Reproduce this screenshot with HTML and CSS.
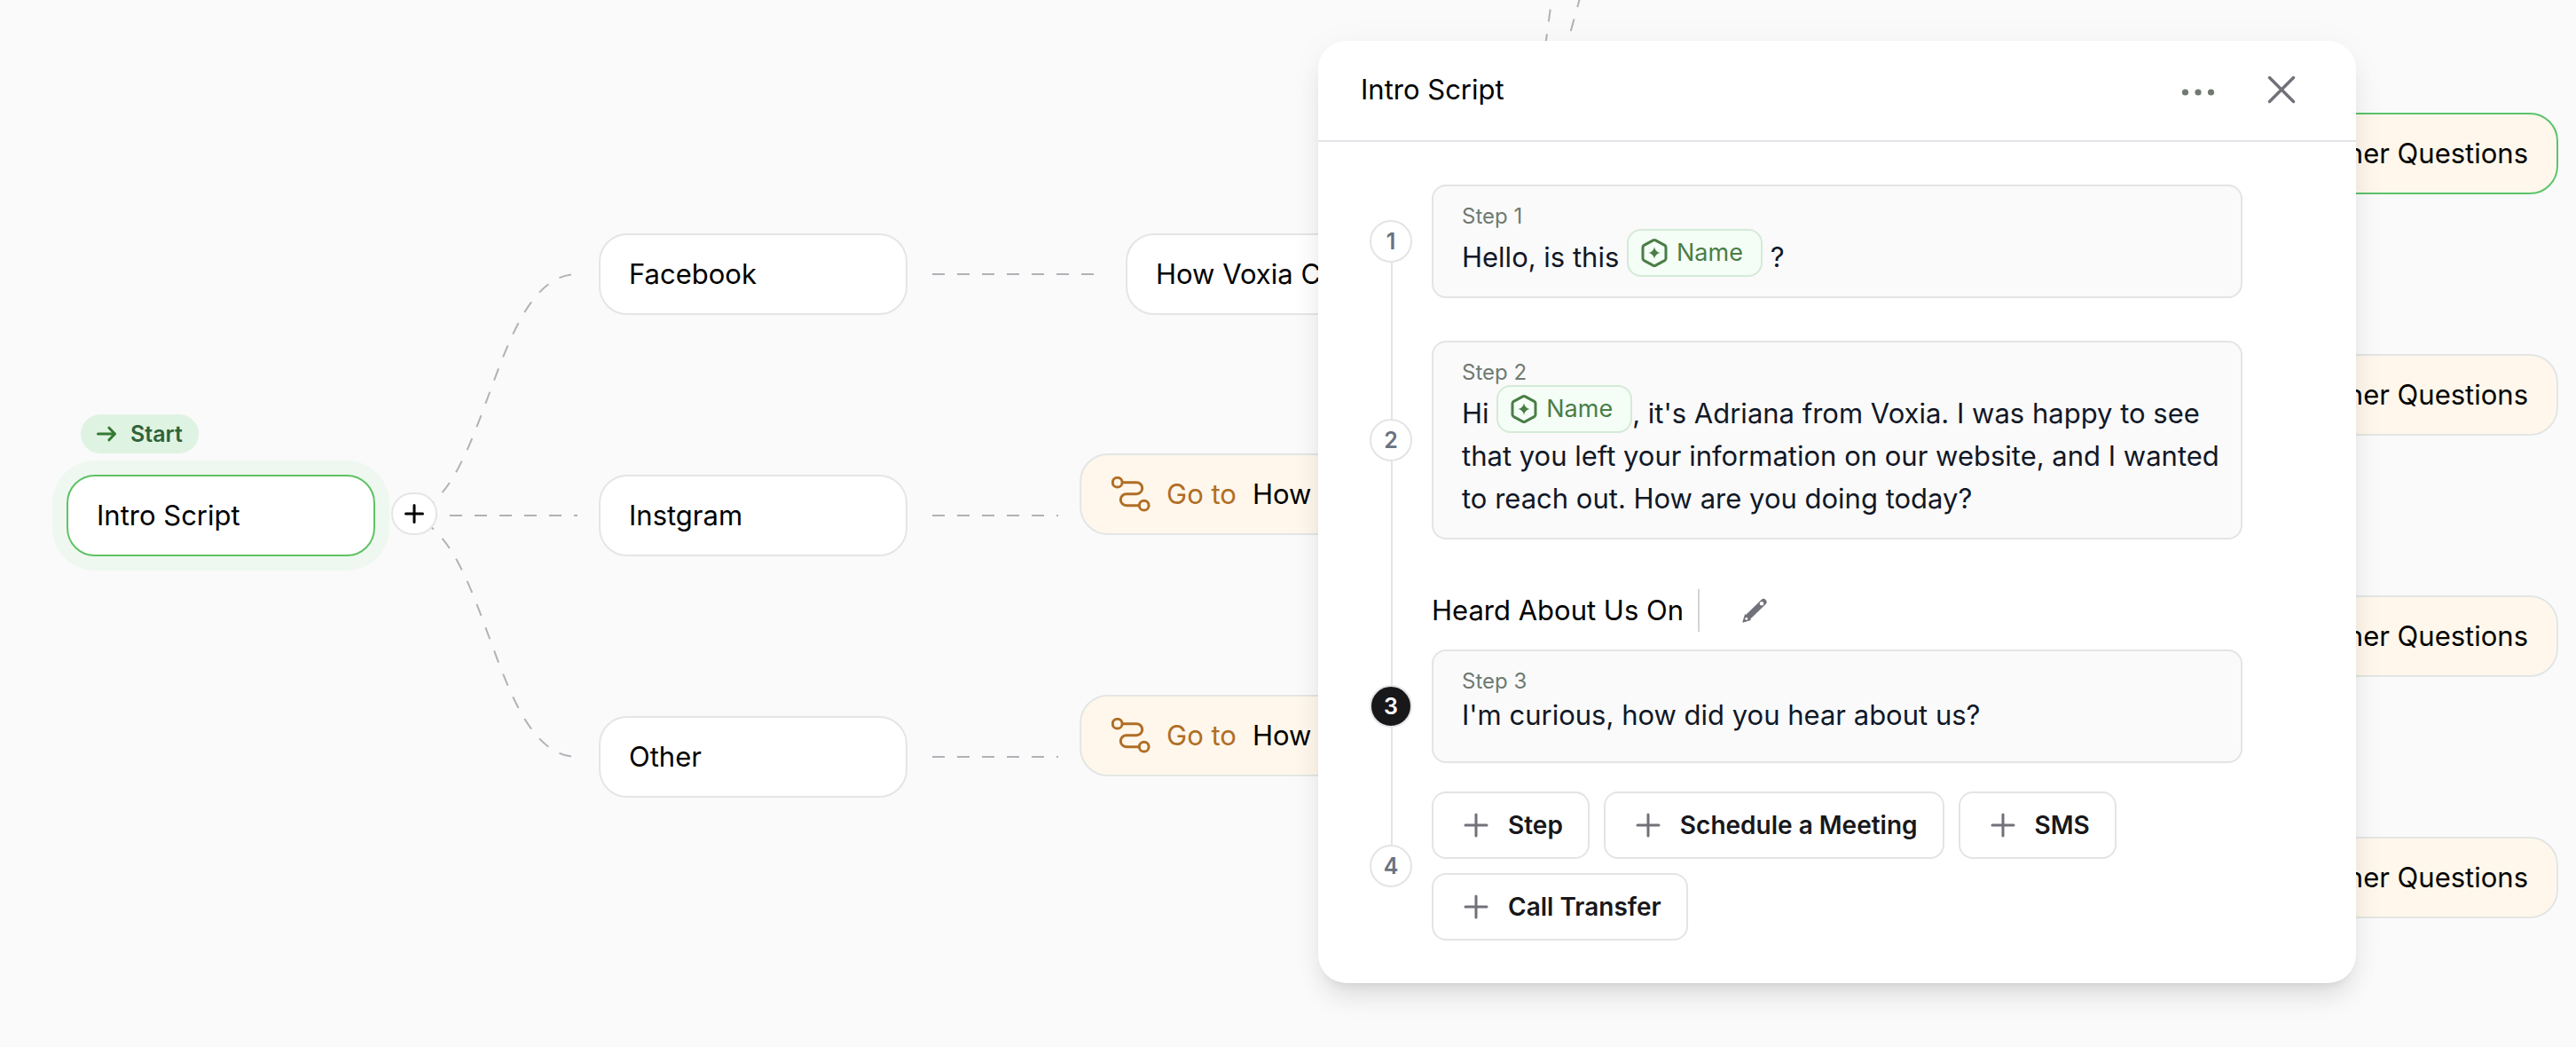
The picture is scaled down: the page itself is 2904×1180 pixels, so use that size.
FILE: index.html
```html
<!DOCTYPE html>
<html lang="en">
<head>
<meta charset="utf-8">
<meta name="viewport" content="width=device-width, initial-scale=1">
<title>Intro Script</title>
<link rel="stylesheet" href="styles.css">
</head>
<body>
<svg class="sprite" aria-hidden="true">
  <symbol id="route" viewBox="0 0 44 40">
    <g fill="none" stroke="currentColor" stroke-width="3">
      <circle cx="6.7" cy="6.7" r="5.4"/>
      <path d="M12 6.7H28.2a6.5 6.5 0 0 1 0 13H16.8a6.5 6.5 0 0 0 0 13H31.4"/>
      <circle cx="36.7" cy="32.7" r="5.4"/>
    </g>
  </symbol>
  <symbol id="variable" viewBox="0 0 30 32">
    <path d="M13.6 1.9 3.4 7.4Q2 8.2 2 9.8V22.2Q2 23.8 3.4 24.6L13.6 30.1Q15 30.8 16.4 30.1L26.6 24.6Q28 23.8 28 22.2V9.8Q28 8.2 26.6 7.4L16.4 1.9Q15 1.2 13.6 1.9Z" fill="none" stroke="currentColor" stroke-width="3"/>
    <path d="M15 9.5Q16.2 14.8 21.5 16 16.2 17.2 15 22.5 13.8 17.2 8.5 16 13.8 14.8 15 9.5Z" fill="currentColor"/>
  </symbol>
  <symbol id="plus" viewBox="0 0 28 28">
    <path d="M14 2V26M2 14H26" fill="none" stroke="currentColor" stroke-width="3" stroke-linecap="round"/>
  </symbol>
</svg>

<main class="canvas">
  <svg class="edges" aria-hidden="true">
    <path d="M451 581C551 581 551 309 651 309"/>
    <path d="M451 581H651"/>
    <path d="M451 581C551 581 551 853 651 853"/>
    <path d="M1051 309H1233"/>
    <path d="M1051 581H1193"/>
    <path d="M1051 853H1193"/>
    <path d="M1747.7 10.5 1742 52.5"/>
    <path d="M1782 -5.5 1770.5 36"/>
  </svg>

  <div class="start-tag">
    <svg width="22" height="18" viewBox="0 0 22 18" aria-hidden="true"><path d="M1.500 9H20M14 2.200 20.500 9 14 15.800" fill="none" stroke="#347a33" stroke-width="3" stroke-linecap="round" stroke-linejoin="round"/></svg>
    <span>Start</span>
  </div>
  <div class="node node-intro">Intro Script</div>
  <button class="add-branch" aria-label="Add branch"><svg width="22" height="22" viewBox="0 0 22 22" aria-hidden="true"><path d="M11 1.500V20.500M1.500 11H20.500" fill="none" stroke="#000" stroke-width="3" stroke-linecap="round"/></svg></button>

  <div class="node node-facebook">Facebook</div>
  <div class="node node-instagram">Instgram</div>
  <div class="node node-other">Other</div>

  <div class="node node-calls">How Voxia Calls</div>
  <div class="node goto goto-instagram"><svg class="route" aria-hidden="true"><use href="#route"/></svg><span class="goto-label">Go to</span><span>How Voxia Calls</span></div>
  <div class="node goto goto-other"><svg class="route" aria-hidden="true"><use href="#route"/></svg><span class="goto-label">Go to</span><span>How Voxia Calls</span></div>

  <div class="node goto questions questions-1 selected">Other Questions</div>
  <div class="node goto questions questions-2">Other Questions</div>
  <div class="node goto questions questions-3">Other Questions</div>
  <div class="node goto questions questions-4">Other Questions</div>

  <section class="panel" aria-labelledby="panel-title">
    <header class="panel-header">
      <h1 class="panel-title" id="panel-title">Intro Script</h1>
      <button class="icon-button" aria-label="More options"><svg width="40" height="32" viewBox="0 0 40 32" aria-hidden="true"><g fill="#6f7a72"><circle cx="5.500" cy="19" r="3.600"/><circle cx="20" cy="19" r="3.600"/><circle cx="34.500" cy="19" r="3.600"/></g></svg></button>
      <button class="icon-button" aria-label="Close"><svg width="32" height="32" viewBox="0 0 32 32" aria-hidden="true"><path d="M2.500 2.500 29.500 29.500M29.500 2.500 2.500 29.500" fill="none" stroke="#71717a" stroke-width="3.500" stroke-linecap="round"/></svg></button>
    </header>

    <ol class="steps">
      <li class="step">
        <span class="badge">1</span>
        <div class="card">
          <p class="card-label">Step 1</p>
          <p class="card-text">Hello, is this <span class="chip"><svg class="chip-icon" aria-hidden="true"><use href="#variable"/></svg>Name</span> ?</p>
        </div>
      </li>
      <li class="step">
        <span class="badge">2</span>
        <div class="card">
          <p class="card-label">Step 2</p>
          <p class="card-text">Hi <span class="chip"><svg class="chip-icon" aria-hidden="true"><use href="#variable"/></svg>Name</span>, it's Adriana from Voxia. I was happy to see that you left your information on our website, and I wanted to reach out. How are you doing today?</p>
        </div>
      </li>
      <li class="step">
        <div class="step-heading">
          <h2 class="step-title">Heard About Us On</h2>
          <button class="edit-button" aria-label="Edit title"><svg width="28" height="28" viewBox="0 0 28 28" aria-hidden="true"><path d="M7 21 24 4.500" fill="none" stroke="#71717a" stroke-width="7" stroke-linecap="round"/><path d="M.8 27.200 3.500 18.500 9.500 24.500Z" fill="#71717a" stroke="#71717a" stroke-linejoin="round"/><circle cx="22" cy="6.200" r="2.200" fill="#fff"/><circle cx="4.800" cy="23.200" r="1.500" fill="#fff"/></svg></button>
        </div>
        <span class="badge current">3</span>
        <div class="card">
          <p class="card-label">Step 3</p>
          <p class="card-text">I'm curious, how did you hear about us?</p>
        </div>
      </li>
      <li class="step last">
        <span class="badge">4</span>
        <div class="actions">
          <button class="action"><svg class="plus" aria-hidden="true"><use href="#plus"/></svg>Step</button>
          <button class="action"><svg class="plus" aria-hidden="true"><use href="#plus"/></svg>Schedule a Meeting</button>
          <button class="action"><svg class="plus" aria-hidden="true"><use href="#plus"/></svg>SMS</button>
          <button class="action"><svg class="plus" aria-hidden="true"><use href="#plus"/></svg>Call Transfer</button>
        </div>
      </li>
    </ol>
  </section>
</main>
</body>
</html>
```
FILE: styles.css
```css
* {
  box-sizing: border-box;
}

body {
  margin: 0;
  background: #fafafa;
  color: #000;
  font-family: Inter, "Liberation Sans", sans-serif;
  font-size: 31px;
  line-height: 48px;
}

h1,
h2,
p,
ol {
  margin: 0;
  padding: 0;
  font-size: inherit;
  font-weight: 400;
}

button {
  margin: 0;
  padding: 0;
  border: 0;
  background: none;
  color: inherit;
  font: inherit;
  cursor: pointer;
}

svg {
  display: block;
  flex: none;
}

.sprite {
  position: absolute;
  width: 0;
  height: 0;
}

/* Flow canvas */
.canvas {
  position: relative;
  min-height: 100vh;
  overflow: hidden;
}

.edges {
  position: absolute;
  inset: 0;
  width: 100%;
  height: 100%;
  fill: none;
  stroke: #b1b1b7;
  stroke-width: 2;
  stroke-dasharray: 14 14;
}

.node {
  position: absolute;
  display: flex;
  align-items: center;
  width: 348px;
  height: 92px;
  padding: 0 32px;
  border: 2px solid #e5e5e5;
  border-radius: 32px;
  background: #fff;
  white-space: nowrap;
}

.node-intro {
  left: 75px;
  top: 535px;
  border-color: #5fc264;
  box-shadow: 0 0 0 16px #eef8f0;
}

.node-facebook { left: 675px; top: 263px; }
.node-instagram { left: 675px; top: 535px; }
.node-other { left: 675px; top: 807px; }
.node-calls { left: 1269px; top: 263px; }

.goto {
  gap: 18px;
  width: 500px;
  border-color: #e3e6e4;
  background: #fff7eb;
}

.goto-label {
  color: #b06e26;
}

.route {
  width: 44px;
  height: 40px;
  color: #b06e26;
}

.goto-instagram,
.goto-other {
  padding-left: 34px;
}

.goto-instagram { left: 1217px; top: 511px; }
.goto-other { left: 1217px; top: 783px; }

.questions {
  left: 2384px;
  justify-content: flex-end;
}

.questions-1 { top: 127px; }
.questions-2 { top: 399px; }
.questions-3 { top: 671px; }
.questions-4 { top: 943px; }

.selected {
  border-color: #5bc46b;
}

.start-tag {
  position: absolute;
  left: 91px;
  top: 467px;
  display: flex;
  align-items: center;
  gap: 16px;
  height: 44px;
  padding: 0 18px;
  border-radius: 22px;
  background: #dff3e3;
  color: #2f6338;
  font-size: 25px;
  font-weight: 600;
}

.add-branch {
  position: absolute;
  left: 441px;
  top: 555px;
  display: grid;
  place-items: center;
  width: 52px;
  height: 48px;
  border: 2px solid #e5e5e5;
  border-radius: 24px;
  background: #fff;
}

/* Script panel */
.panel {
  position: absolute;
  left: 1486px;
  top: 46px;
  width: 1170px;
  border-radius: 32px;
  background: #fff;
  box-shadow: 0 20px 30px -6px rgba(0, 0, 0, 0.1), 0 8px 12px -8px rgba(0, 0, 0, 0.1), 0 4px 40px rgba(0, 0, 0, 0.04);
}

.panel-header {
  display: flex;
  align-items: center;
  gap: 58px;
  height: 114px;
  padding: 0 68px 2px 48px;
  border-bottom: 2px solid #e4e4e9;
}

.panel-title {
  flex: 1;
}

.steps {
  position: relative;
  display: grid;
  gap: 48px;
  padding: 48px 128px 48px 58px;
  list-style: none;
}

.steps::before {
  content: "";
  position: absolute;
  left: 82px;
  top: 112px;
  bottom: 132px;
  width: 2px;
  background: #e4e4e7;
}

.step {
  display: grid;
  grid-template-columns: 48px 1fr;
  column-gap: 22px;
  align-items: center;
}

.step.last {
  margin-top: -16px;
}

.badge {
  position: relative;
  display: grid;
  place-items: center;
  width: 48px;
  height: 48px;
  border: 2px solid #e4e4e7;
  border-radius: 50%;
  background: #fff;
  color: #6b7280;
  font-size: 25px;
  font-weight: 600;
  line-height: 32px;
}

.badge.current {
  background: #18181b;
  color: #fff;
}

.card {
  min-height: 128px;
  padding: 20px 16px 20px 32px;
  border: 2px solid #e4e4e4;
  border-radius: 16px;
  background: #fafafa;
}

.card-label {
  color: #6f7a72;
  font-size: 24px;
  line-height: 28px;
}

.card-text {
  color: #111827;
}

.chip {
  display: inline-flex;
  align-items: center;
  gap: 10px;
  height: 54px;
  padding: 0 20px 0 14px;
  border: 2px solid #d5ead7;
  border-radius: 16px;
  background: #f4fdf6;
  color: #4a7d46;
  font-size: 27px;
  line-height: 32px;
  vertical-align: baseline;
}

.chip-icon {
  width: 30px;
  height: 32px;
}

.step-heading {
  grid-column: 2;
  display: flex;
  align-items: center;
  gap: 48px;
  padding: 8px 0 20px;
}

.step-title {
  padding-right: 16px;
  border-right: 2px solid #d4d4d8;
}

.actions {
  display: flex;
  flex-wrap: wrap;
  gap: 16px;
}

.action {
  display: flex;
  align-items: center;
  gap: 22px;
  height: 76px;
  padding: 0 28px 0 34px;
  border: 2px solid #e4e4e7;
  border-radius: 16px;
  background: #fff;
  color: #18181b;
  font-size: 28px;
  font-weight: 600;
}

.plus {
  width: 28px;
  height: 28px;
  color: #71717a;
}
```
